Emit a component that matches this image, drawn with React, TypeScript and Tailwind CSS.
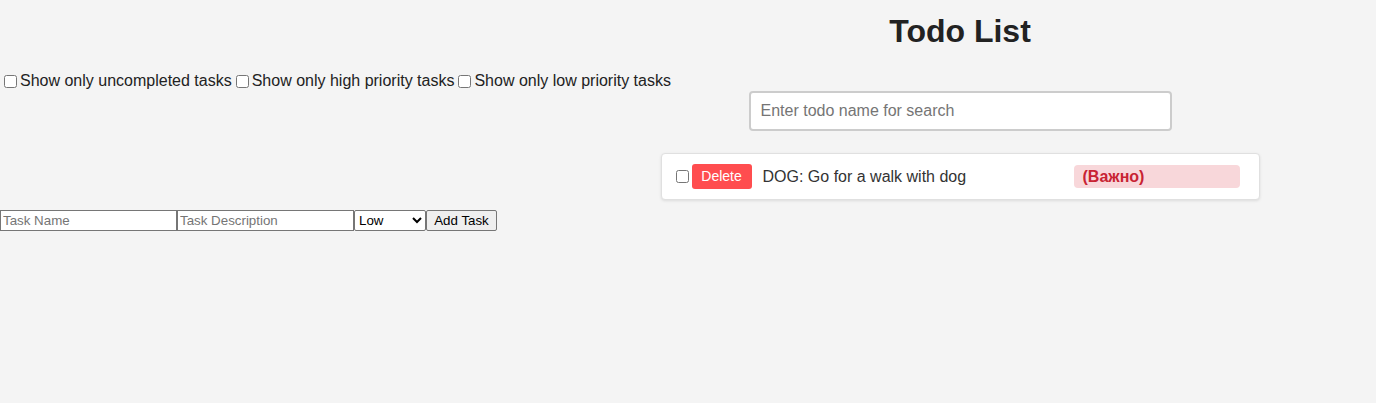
import { useState } from "react";

type Todo = { id: number; name: string; description: string; priority: "High" | "Low"; done: boolean };

const initialTodos: Todo[] = [
  { id: 1, name: "DOG", description: "Go for a walk with dog", priority: "High", done: false },
];

export default function App() {
  const [todos, setTodos] = useState<Todo[]>(initialTodos);
  const [search, setSearch] = useState("");
  const [onlyOpen, setOnlyOpen] = useState(false);
  const [onlyHigh, setOnlyHigh] = useState(false);
  const [onlyLow, setOnlyLow] = useState(false);
  const [name, setName] = useState("");
  const [description, setDescription] = useState("");
  const [priority, setPriority] = useState<"High" | "Low">("Low");

  const visible = todos
    .filter((t) => t.name.toLowerCase().includes(search.toLowerCase()))
    .filter((t) => !onlyOpen || !t.done)
    .filter((t) => !onlyHigh || t.priority === "High")
    .filter((t) => !onlyLow || t.priority === "Low");

  return (
    <div className="flex min-h-[403px] bg-[#f4f4f4] font-['Liberation_Sans',Arial,sans-serif] text-[#222]">
      <div className="w-[544px] shrink-0">
        <div className="mt-[72px] flex h-[18px] items-center whitespace-nowrap text-[16px]">
          <label className="flex items-center">
            <input type="checkbox" className="ml-[4px] mr-[3px] h-[13px] w-[13px]" checked={onlyOpen} onChange={(e) => setOnlyOpen(e.target.checked)} />
            Show only uncompleted tasks
          </label>
          <label className="flex items-center">
            <input type="checkbox" className="ml-[4px] mr-[3px] h-[13px] w-[13px]" checked={onlyHigh} onChange={(e) => setOnlyHigh(e.target.checked)} />
            Show only high priority tasks
          </label>
          <label className="flex items-center">
            <input type="checkbox" className="ml-[4px] mr-[3px] h-[13px] w-[13px]" checked={onlyLow} onChange={(e) => setOnlyLow(e.target.checked)} />
            Show only low priority tasks
          </label>
        </div>

        <form
          className="mt-[120px] flex items-center whitespace-nowrap text-[13.33px] text-black"
          onSubmit={(e) => {
            e.preventDefault();
            if (!name.trim()) return;
            setTodos([...todos, { id: Date.now(), name, description, priority, done: false }]);
            setName("");
            setDescription("");
          }}
        >
          <input
            className="h-[21px] w-[177px] border border-[#767676] bg-white px-[2px] placeholder:text-[#757575]"
            placeholder="Task Name"
            value={name}
            onChange={(e) => setName(e.target.value)}
          />
          <input
            className="h-[21px] w-[177px] border border-[#767676] bg-white px-[2px] placeholder:text-[#757575]"
            placeholder="Task Description"
            value={description}
            onChange={(e) => setDescription(e.target.value)}
          />
          <select
            className="h-[21px] w-[72px] rounded-[2px] border border-[#767676] bg-white"
            value={priority}
            onChange={(e) => setPriority(e.target.value as "High" | "Low")}
          >
            <option>Low</option>
            <option>High</option>
          </select>
          <button type="submit" className="h-[21px] w-[71px] rounded-[2px] border border-[#767676] bg-[#efefef] px-[6px]">
            Add Task
          </button>
        </form>
      </div>

      <div className="flex flex-1 flex-col items-center">
        <h1 className="mt-[13px] text-[32px] leading-[37px] font-bold text-[#222]">Todo List</h1>
        <input
          className="mt-[41px] h-[40px] w-[423px] rounded-[4px] border-2 border-[#ccc] bg-white px-[10px] text-[16px] placeholder:text-[#757575]"
          placeholder="Enter todo name for search"
          value={search}
          onChange={(e) => setSearch(e.target.value)}
        />
        <div className="mt-[22px] flex w-[599px] flex-col gap-2">
          {visible.map((t) => (
            <div
              key={t.id}
              className="flex h-[47px] items-center rounded-[4px] border border-[#e0e0e0] bg-white px-[10px] shadow-[0_1px_3px_rgba(0,0,0,0.1)]"
            >
              <input
                type="checkbox"
                className="ml-[4px] mr-[3px] h-[13px] w-[13px]"
                checked={t.done}
                onChange={() => setTodos(todos.map((x) => (x.id === t.id ? { ...x, done: !x.done } : x)))}
              />
              <button
                className="h-[25px] w-[60px] rounded-[3px] bg-[#ff4d4f] text-[14px] text-white"
                onClick={() => setTodos(todos.filter((x) => x.id !== t.id))}
              >
                Delete
              </button>
              <span className={`ml-[11px] flex-1 text-[16px] text-[#333] ${t.done ? "line-through" : ""}`}>
                {t.name}: {t.description}
              </span>
              {t.priority === "High" && (
                <span className="mr-[9px] flex h-[23px] w-[166px] items-center rounded-[4px] bg-[#f8d7da] pl-[9px] text-[16px] font-bold text-[#c82333]">
                  (Важно)
                </span>
              )}
            </div>
          ))}
        </div>
      </div>
    </div>
  );
}
